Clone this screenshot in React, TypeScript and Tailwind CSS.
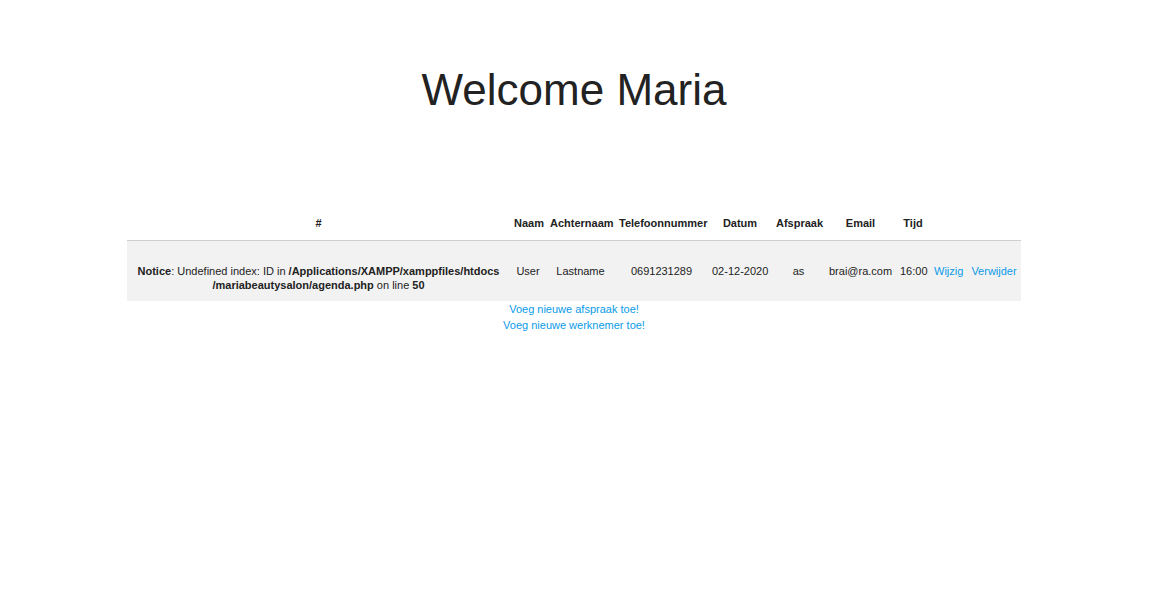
const headers = ['#', 'Naam', 'Achternaam', 'Telefoonnummer', 'Datum', 'Afspraak', 'Email', 'Tijd', '', ''];

const cols = 'grid grid-cols-[383px_36px_69px_93px_64px_53px_71px_34px_37px_54px]';

export default function App() {
  return (
    <div className="w-[1148px] bg-white text-center text-[#222] font-['Liberation_Sans',Arial,sans-serif]">
      <h1 className="pt-[68px] text-[44px] leading-[44px] font-normal text-[#222]">Welcome Maria</h1>

      <div className="mx-auto mt-[94px] w-[894px] text-[11px] leading-[14px]">
        {/* header row */}
        <div className={`${cols} border-b border-[#cfcfcf]`}>
          {headers.map((h, i) => (
            <div key={i} className="whitespace-nowrap px-[4px] py-[10px] font-bold">
              {h}
            </div>
          ))}
        </div>

        {/* data row */}
        <div className={`${cols} items-center whitespace-nowrap bg-[#f2f2f2]`}>
          <div className="px-[4px] py-[9px]">
            <br />
            <b>Notice</b>: Undefined index: ID in <b>/Applications/XAMPP/xamppfiles/htdocs</b>
            <br />
            <b>/mariabeautysalon/agenda.php</b> on line <b>50</b>
          </div>
          <div className="px-[4px]">User</div>
          <div className="px-[4px]">Lastname</div>
          <div className="px-[4px]">0691231289</div>
          <div className="px-[4px]">02-12-2020</div>
          <div className="px-[4px]">as</div>
          <div className="px-[4px]">brai@ra.com</div>
          <div className="px-[4px]">16:00</div>
          <div className="px-[4px]">
            <a href="#" className="text-[#0a9be8]">Wijzig</a>
          </div>
          <div className="px-[4px]">
            <a href="#" className="text-[#0a9be8]">Verwijder</a>
          </div>
        </div>
      </div>

      <div className="flex flex-col items-center text-[11px] leading-[16px]">
        <a href="#" className="text-[#0a9be8]">Voeg nieuwe afspraak toe!</a>
        <a href="#" className="text-[#0a9be8]">Voeg nieuwe werknemer toe!</a>
      </div>
    </div>
  );
}
